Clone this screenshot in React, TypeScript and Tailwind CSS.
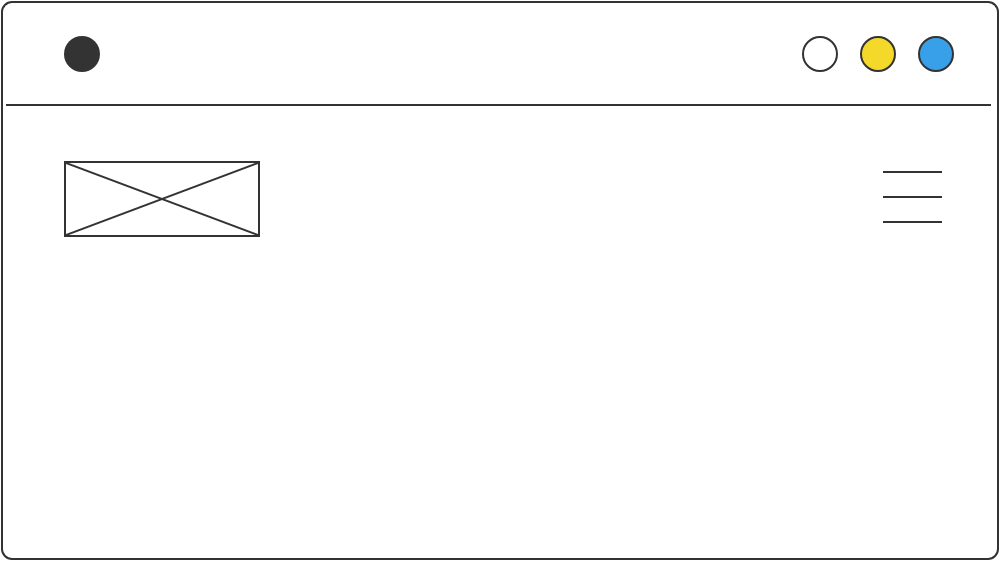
export default function App() {
  return (
    <div className="w-[1001px] h-[561px] bg-white">
      <div className="ml-px mt-px w-[998px] h-[559px] border-2 border-[#333] rounded-[11px] flex flex-col">
        {/* header */}
        <header className="h-[101px] flex items-center justify-between pl-[61px] pr-[43px]">
          <div className="w-9 h-9 rounded-full bg-[#333]" />
          <div className="flex items-center gap-[22px]">
            <div className="w-9 h-9 rounded-full border-2 border-[#333] bg-white" />
            <div className="w-9 h-9 rounded-full border-2 border-[#333] bg-[#f4d92a]" />
            <div className="w-9 h-9 rounded-full border-2 border-[#333] bg-[#38a0e9]" />
          </div>
        </header>
        <div className="ml-[3px] mr-[6px] h-[2px] bg-[#333]" />

        {/* body */}
        <main className="flex items-start justify-between pt-[55px] pl-[61px] pr-[55px]">
          <div className="w-[196px] h-[76px] border-2 border-[#333]">
            <svg className="w-full h-full block" viewBox="0 0 192 72" preserveAspectRatio="none">
              <line x1="0" y1="0" x2="192" y2="72" stroke="#333" strokeWidth="2" />
              <line x1="192" y1="0" x2="0" y2="72" stroke="#333" strokeWidth="2" />
            </svg>
          </div>
          <div className="mt-[10px] flex flex-col gap-[23px]">
            <div className="w-[59px] h-[2px] bg-[#333]" />
            <div className="w-[59px] h-[2px] bg-[#333]" />
            <div className="w-[59px] h-[2px] bg-[#333]" />
          </div>
        </main>
      </div>
    </div>
  );
}
